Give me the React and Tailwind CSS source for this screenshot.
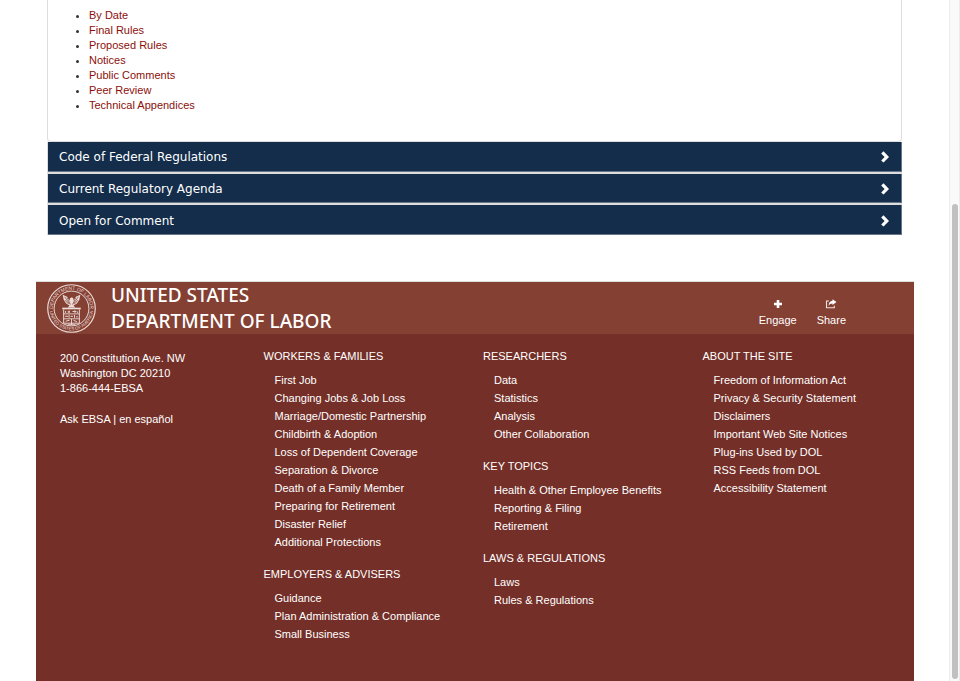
const ruleLinks = [
  'By Date',
  'Final Rules',
  'Proposed Rules',
  'Notices',
  'Public Comments',
  'Peer Review',
  'Technical Appendices',
];

const panels = ['Code of Federal Regulations', 'Current Regulatory Agenda', 'Open for Comment'];

const footerColumns = [
  [
    {
      title: 'WORKERS & FAMILIES',
      links: [
        'First Job',
        'Changing Jobs & Job Loss',
        'Marriage/Domestic Partnership',
        'Childbirth & Adoption',
        'Loss of Dependent Coverage',
        'Separation & Divorce',
        'Death of a Family Member',
        'Preparing for Retirement',
        'Disaster Relief',
        'Additional Protections',
      ],
    },
    {
      title: 'EMPLOYERS & ADVISERS',
      links: ['Guidance', 'Plan Administration & Compliance', 'Small Business'],
    },
  ],
  [
    { title: 'RESEARCHERS', links: ['Data', 'Statistics', 'Analysis', 'Other Collaboration'] },
    {
      title: 'KEY TOPICS',
      links: ['Health & Other Employee Benefits', 'Reporting & Filing', 'Retirement'],
    },
    { title: 'LAWS & REGULATIONS', links: ['Laws', 'Rules & Regulations'] },
  ],
  [
    {
      title: 'ABOUT THE SITE',
      links: [
        'Freedom of Information Act',
        'Privacy & Security Statement',
        'Disclaimers',
        'Important Web Site Notices',
        'Plug-ins Used by DOL',
        'RSS Feeds from DOL',
        'Accessibility Statement',
      ],
    },
  ],
];

function Seal() {
  return (
    <svg
      viewBox="0 0 100 100"
      className="size-[49px] shrink-0"
      fill="none"
      stroke="#ecdcd8"
      role="img"
      aria-label="Department of Labor seal"
    >
      <defs>
        <path id="seal-top" d="M12 50 A38 38 0 0 1 88 50" />
        <path id="seal-bottom" d="M5.500 50 A44.500 44.500 0 0 0 94.500 50" />
      </defs>
      <circle cx="50" cy="50" r="48.500" strokeWidth="2.400" />
      <circle cx="50" cy="50" r="35.500" strokeWidth="2" />
      <g fill="#ecdcd8" stroke="none" fontSize="10" fontFamily="Liberation Sans, sans-serif" textAnchor="middle">
        <text>
          <textPath href="#seal-top" startOffset="50%">DEPARTMENT OF LABOR</textPath>
        </text>
        <text fontSize="9">
          <textPath href="#seal-bottom" startOffset="50%">UNITED STATES OF AMERICA</textPath>
        </text>
      </g>
      <path
        d="M32 22 L41 26 L46 34 L47 29 L51 27 L54 30 L54 34 L59 26 L68 22 L66 32 L61 40 L54 44 L58 48 L42 48 L46 44 L39 40 L34 32 Z"
        fill="#ecdcd8"
        stroke="none"
      />
      <path
        d="M36 26 L46 41 M41 28 L48 42 M37 33 L44 41 M64 26 L54 41 M59 28 L52 42 M63 33 L56 41"
        stroke="#844033"
        strokeWidth="1.400"
      />
      <path d="M31 50 H69" strokeWidth="3.400" />
      <path d="M34 52 V80 H66 V52" strokeWidth="2" />
      <path d="M34 61 H66 M34 71 H66 M50 71 V84 M42 83 H58" strokeWidth="1.800" />
      <path
        d="M38 55 V59 M42 57 H47 M45 54 V59 M52 56 H60 M57 54 V59 M62 56 V59 M37 66 H43 M45 63 V69 M48 66 H53 M56 63 V69 M59 67 H63 M38 76 L46 74 M54 74 L61 77"
        strokeWidth="2"
      />
    </svg>
  );
}

function Chevron() {
  return (
    <svg viewBox="0 0 8 12" className="h-3 w-2" aria-hidden="true">
      <path d="M2.500 0.200 L8 6 L2.500 11.600 L0.200 9.400 L3.600 6 L0.200 2.400 Z" fill="white" />
    </svg>
  );
}

function PlusIcon() {
  return (
    <svg viewBox="0 0 12 12" className="size-3" aria-hidden="true">
      <path d="M4.700 2 H7.300 V4.800 H10 V7.300 H7.300 V10 H4.700 V7.300 H2 V4.800 H4.700 Z" fill="white" />
    </svg>
  );
}

function ShareIcon() {
  return (
    <svg viewBox="0 0 12 12" className="size-3" aria-hidden="true">
      <path d="M4 3 H1.500 V9.700 H9.300 V7.700" fill="none" stroke="#f0e2df" strokeWidth="1.100" />
      <path d="M7.500 1.200 L11.500 4.100 L7.500 7 V5.400 Q4.900 5.300 3.600 7.700 Q3.800 3.200 7.500 2.800 Z" fill="white" />
    </svg>
  );
}

function LinkGroup({ title, links }) {
  return (
    <section>
      <h3 className="mb-[6px]">{title}</h3>
      <ul className="pl-[11px]">
        {links.map((label) => (
          <li key={label}>
            <a href="#" className="hover:underline">{label}</a>
          </li>
        ))}
      </ul>
    </section>
  );
}

export default function App() {
  return (
    <div className="flex min-h-screen bg-white font-['Liberation_Sans',Arial,sans-serif] text-[11px] leading-[15px]">
      <div className="flex min-w-0 flex-1 flex-col pr-[35px] pl-9">
        <main className="mr-3 ml-[11px]">
          <section className="rounded-b border border-t-0 border-[#dddddd] pt-2 pb-7">
            <ul className="list-disc pl-[41px] text-[#333333]">
              {ruleLinks.map((label) => (
                <li key={label}>
                  <a href="#" className="text-[#8b0f0a] hover:underline">{label}</a>
                </li>
              ))}
            </ul>
          </section>

          <div className="flex h-[93px] flex-col gap-[2px] border-l border-[#dddddd] bg-[#dddddd]">
            {panels.map((title) => (
              <button
                key={title}
                type="button"
                className="flex flex-1 items-center justify-between border-r border-b border-[#66768a] bg-[#132d4b] pt-[2px] pr-3 pl-[11px] text-left font-['DejaVu_Sans',Verdana,sans-serif] text-[12px] leading-4 text-white"
              >
                {title}
                <Chevron />
              </button>
            ))}
          </div>
        </main>

        <footer className="mt-[46px] flex flex-1 flex-col border-t border-[#dddddd] bg-[#732f28] text-white">
          <div className="flex items-center justify-between bg-[#844033] pr-[68px] pl-[11px]">
            <div className="flex items-center gap-[15px]">
              <Seal />
              <h2 className="font-['Noto_Sans','Open_Sans',sans-serif] text-[19px] leading-[26px] font-medium">
                UNITED STATES
                <br />
                DEPARTMENT OF LABOR
              </h2>
            </div>
            <div className="flex gap-5 pt-[10px]">
              <button type="button" className="flex flex-col items-center gap-[3px]">
                <PlusIcon />
                Engage
              </button>
              <button type="button" className="flex flex-col items-center gap-[3px]">
                <ShareIcon />
                Share
              </button>
            </div>
          </div>

          <div className="grid grid-cols-4 pt-[13px] leading-[18px]">
            <address className="pt-1 pl-6 leading-[15px] not-italic">
              <p>200 Constitution Ave. NW</p>
              <p>Washington DC 20210</p>
              <p>1-866-444-EBSA</p>
              <p className="mt-4">
                <a href="#" className="hover:underline">Ask EBSA</a> |{' '}
                <a href="#" className="hover:underline">en español</a>
              </p>
            </address>
            {footerColumns.map((groups) => (
              <nav key={groups[0].title} aria-label={groups[0].title} className="flex flex-col gap-[14px] pl-2">
                {groups.map((group) => (
                  <LinkGroup key={group.title} title={group.title} links={group.links} />
                ))}
              </nav>
            ))}
          </div>
        </footer>
      </div>

      <div className="flex w-[11px] shrink-0 flex-col items-center border-x border-[#ececec] bg-[#fafafa] pt-[204px] pb-[2px]">
        <div className="w-[6px] flex-1 rounded-full bg-[#c1c1c1]" />
      </div>
    </div>
  );
}
